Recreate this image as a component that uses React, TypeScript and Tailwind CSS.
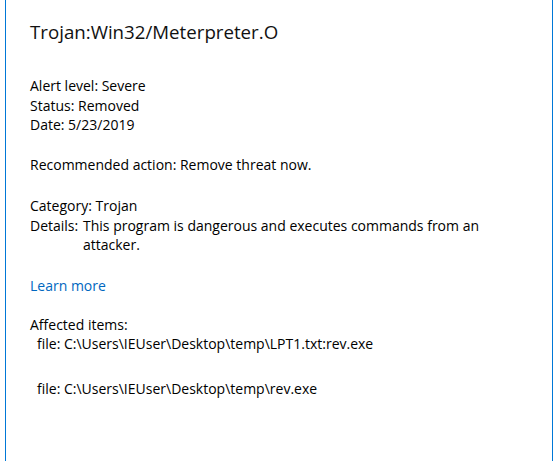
import React from "react";

export default function App() {
  return (
    <div className="w-[555px] h-[461px] bg-white pl-[5px] pr-[2px] overflow-hidden" style={{ fontFamily: '"Open Sans", "Noto Sans", sans-serif' }}>
      <div className="h-full bg-[#0078d7] px-px">
        <div className="h-full bg-white pl-[24px] text-[#000] text-[14px] leading-[19.5px]">
          <div className="pt-[19px] text-[18.7px] leading-[26px] text-[#111]">Trojan:Win32/Meterpreter.O</div>
          <div className="mt-[31px]">
            <div>Alert level: Severe</div>
            <div>Status: Removed</div>
            <div>Date: 5/23/2019</div>
          </div>
          <div className="mt-[20.5px]">Recommended action: Remove threat now.</div>
          <div className="mt-[21.5px]">
            <div>Category: Trojan</div>
            <div className="flex">
              <span className="w-[53px] shrink-0">Details:</span>
              <span>
                This program is dangerous and executes commands from an
                <br />
                attacker.
              </span>
            </div>
          </div>
          <div className="mt-[21px] text-[#0067c0]">Learn more</div>
          <div className="mt-[19.5px]">
            <div>Affected items:</div>
            <div className="pl-[7px]">file: C:\Users\IEUser\Desktop\temp\LPT1.txt:rev.exe</div>
            <div className="pl-[7px] mt-[25px]">file: C:\Users\IEUser\Desktop\temp\rev.exe</div>
          </div>
        </div>
      </div>
    </div>
  );
}
